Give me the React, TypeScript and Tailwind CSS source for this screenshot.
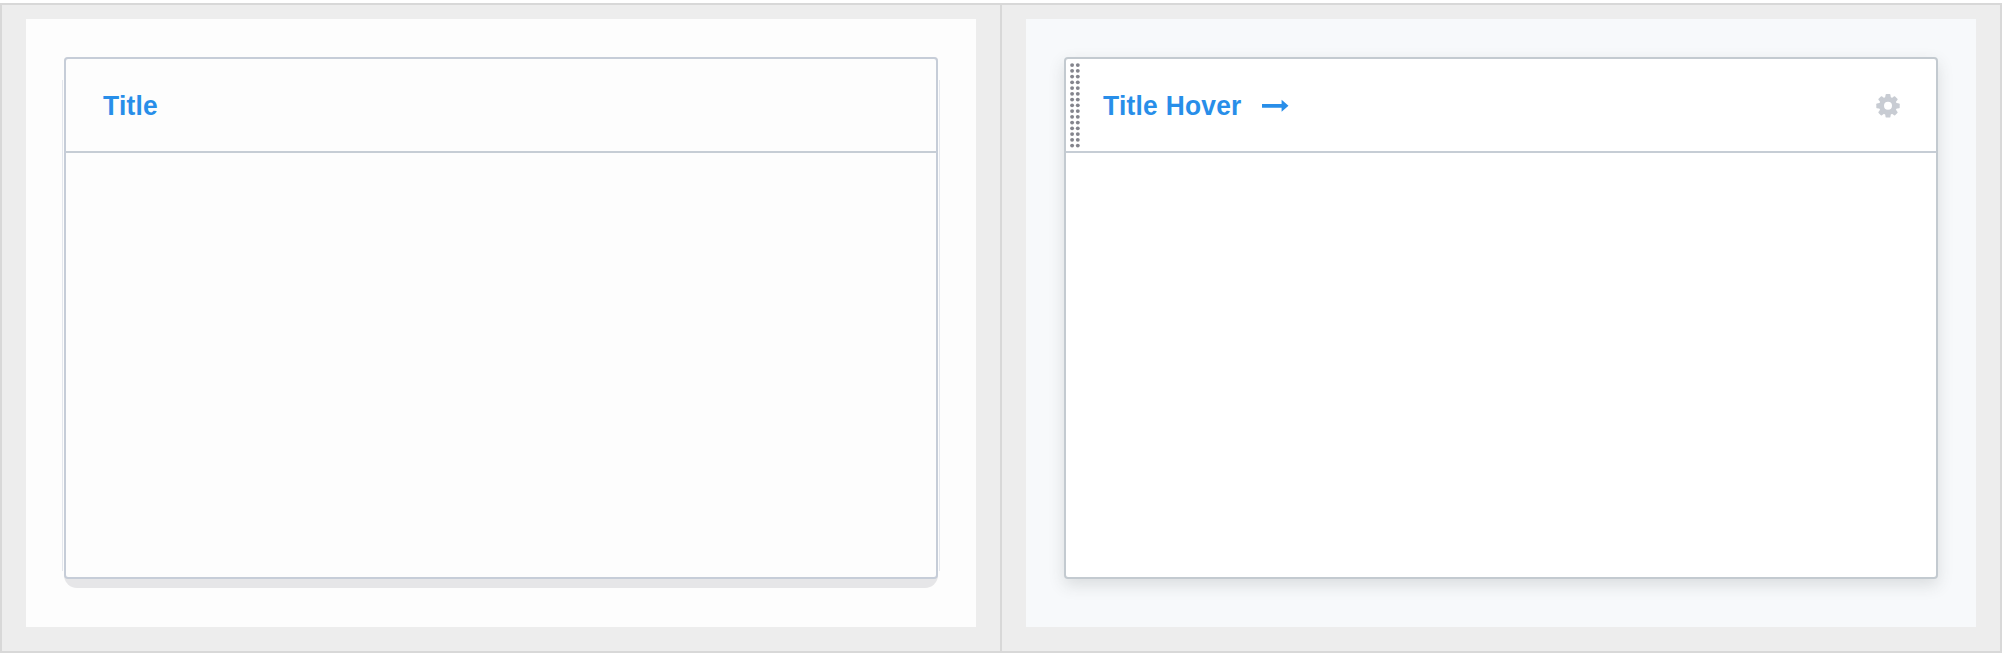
import type { ReactNode } from "react";

const DOT_ROWS = Array.from({ length: 15 }, (_, i) => i);
const TEETH = [0, 45, 90, 135, 180, 225, 270, 315];

function DragHandle() {
  return (
    <svg className="absolute left-[4px] top-[4px]" width="14" height="86" viewBox="0 0 14 86" fill="#84858d">
      {DOT_ROWS.map((i) => (
        <g key={i}>
          <circle cx="2.1" cy={2.1 + i * 5.75} r="1.95" />
          <circle cx="7.8" cy={2.1 + i * 5.75} r="1.95" />
        </g>
      ))}
    </svg>
  );
}

function Arrow() {
  return (
    <svg width="27" height="14" viewBox="0 0 27 14" fill="#288ee9">
      <path d="M0 4.9h19.6V.8l6.9 6-6.9 6V8.7H0z" />
    </svg>
  );
}

function Gear() {
  return (
    <svg width="24" height="24" viewBox="-12 -11.8 24 24" fill="#c8ccd3">
      {TEETH.map((a) => (
        <path key={a} d="M-3 -7.5L-2.4 -11.1Q-2.2 -11.7 -1.6 -11.7H1.6Q2.2 -11.7 2.4 -11.1L3 -7.5z" transform={`rotate(${a})`} />
      ))}
      <circle r="6.5" fill="none" stroke="#c8ccd3" strokeWidth="5" />
    </svg>
  );
}

function Header({ children }: { children: ReactNode }) {
  return (
    <div className="relative flex h-[94px] items-center justify-between border-b-2 border-[#c6cdd5] pl-[37px] pr-[36px] pt-[1px]">
      {children}
    </div>
  );
}

const titleClass =
  "origin-left scale-x-[0.94] text-[28px] leading-[30px] tracking-[0.3px] font-bold text-[#288ee9]";

export default function App() {
  return (
    <div className="h-[656px] w-[2006px] bg-white pt-[3px] font-['Liberation_Sans',Arial,sans-serif]">
      <div className="flex h-[650px] w-[2002px] border-2 border-[#d8d8d8] bg-[#ededed]">
        <div className="w-[1000px] border-r-2 border-[#d8d8d8] pl-[24px] pt-[14px]">
          <div className="h-[608px] w-[950px] bg-[#fdfdfd] pl-[38px] pt-[38px]">
            <div className="relative h-[531px] w-[874px] rounded-t-[4px] rounded-b-[13px] bg-[#e6e6e8]">
              <div className="absolute -left-[2px] top-[23px] h-[491px] w-[878px] border-x border-[#e4e7ed]" />
              <div className="relative h-[522px] rounded-[4px] border-2 border-[#c6cdd8] bg-[#fdfdfd]">
                <Header>
                  <h2 className={titleClass}>Title</h2>
                </Header>
              </div>
            </div>
          </div>
        </div>
        <div className="pl-[24px] pt-[14px]">
          <div className="h-[608px] w-[950px] bg-[#f7f9fb] pl-[38px] pt-[38px]">
            <div className="h-[522px] w-[874px] rounded-[4px] border-2 border-[#c3cad0] bg-white shadow-[0_6px_16px_rgba(55,58,62,0.15)]">
              <Header>
                <DragHandle />
                <div className="flex items-center gap-[11px]">
                  <h2 className={titleClass}>Title Hover</h2>
                  <Arrow />
                </div>
                <Gear />
              </Header>
            </div>
          </div>
        </div>
      </div>
    </div>
  );
}
